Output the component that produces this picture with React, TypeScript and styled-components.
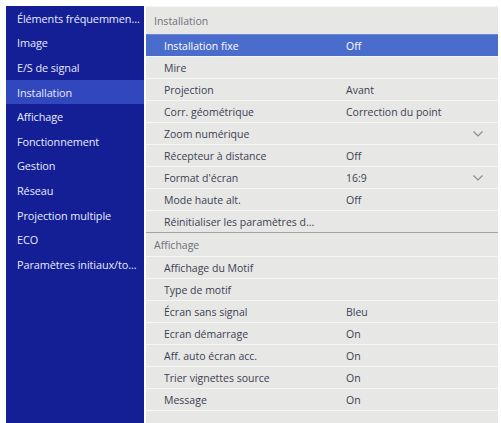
import styled, { createGlobalStyle } from "styled-components";

const GlobalStyle = createGlobalStyle`
  html, body {
    margin: 0;
    padding: 0;
    background: #ffffff;
  }
  body {
    font-family: "Open Sans", "Noto Sans", sans-serif;
  }
`;

type Row = {
  label: string;
  value?: string;
  drop?: boolean;
  active?: boolean;
};

type Section = {
  title: string;
  rows: Row[];
};

const menu = [
  "Éléments fréquemmen...",
  "Image",
  "E/S de signal",
  "Installation",
  "Affichage",
  "Fonctionnement",
  "Gestion",
  "Réseau",
  "Projection multiple",
  "ECO",
  "Paramètres initiaux/to...",
];

const sections: Section[] = [
  {
    title: "Installation",
    rows: [
      { label: "Installation fixe", value: "Off", active: true },
      { label: "Mire" },
      { label: "Projection", value: "Avant" },
      { label: "Corr. géométrique", value: "Correction du point" },
      { label: "Zoom numérique", drop: true },
      { label: "Récepteur à distance", value: "Off" },
      { label: "Format d'écran", value: "16:9", drop: true },
      { label: "Mode haute alt.", value: "Off" },
      { label: "Réinitialiser les paramètres d..." },
    ],
  },
  {
    title: "Affichage",
    rows: [
      { label: "Affichage du Motif" },
      { label: "Type de motif" },
      { label: "Écran sans signal", value: "Bleu" },
      { label: "Ecran démarrage", value: "On" },
      { label: "Aff. auto écran acc.", value: "On" },
      { label: "Trier vignettes source", value: "On" },
      { label: "Message", value: "On" },
      { label: "" },
    ],
  },
];

const Chevron = () => (
  <svg width="12" height="8" viewBox="0 0 12 8">
    <path d="M1.5 1.5 L6 6 L10.5 1.5" fill="none" stroke="#8a8d96" strokeWidth="1.2" />
  </svg>
);

export default function App() {
  return (
    <>
      <GlobalStyle />
      <Screen>
        <Sidebar>
          {menu.map((m, i) => (
            <MenuItem key={i} selected={m === "Installation"}>
              {m}
            </MenuItem>
          ))}
        </Sidebar>
        <Panel>
          {sections.map((s, si) => (
            <Group key={si} first={si === 0}>
              <GroupTitle first={si === 0}>{s.title}</GroupTitle>
              {s.rows.map((r, ri) => (
                <Item key={ri} active={r.active}>
                  <Label>{r.label}</Label>
                  <Value>{r.value}</Value>
                  <Arrow>{r.drop && <Chevron />}</Arrow>
                </Item>
              ))}
            </Group>
          ))}
        </Panel>
      </Screen>
    </>
  );
}

const Screen = styled.div`
  width: 501px;
  height: 423px;
  box-sizing: border-box;
  padding: 6px 3px 0 6px;
  display: flex;
  overflow: hidden;
`;

const Sidebar = styled.div`
  width: 138px;
  flex-shrink: 0;
  background: #141f95;
  display: flex;
  flex-direction: column;
`;

const MenuItem = styled.div<{ selected?: boolean }>`
  height: 24.6px;
  display: flex;
  align-items: center;
  padding-left: 11px;
  font-size: 10.9px;
  color: #e8ebff;
  white-space: nowrap;
  letter-spacing: -0.1px;
  background: ${(p) => (p.selected ? "#3147bd" : "transparent")};
`;

const Panel = styled.div`
  flex: 1;
  margin-left: 2px;
  background: #e7e7e6;
  border-top: 1px solid #f4f4f4;
  display: flex;
  flex-direction: column;
`;

const Group = styled.div<{ first?: boolean }>`
  display: flex;
  flex-direction: column;
  border-top: ${(p) => (p.first ? "none" : "1px solid #a3a3a6")};
`;

const GroupTitle = styled.div<{ first?: boolean }>`
  height: ${(p) => (p.first ? "27px" : "23px")};
  display: flex;
  align-items: center;
  padding-left: 8px;
  font-size: 10.5px;
  color: #6f7078;
`;

const Item = styled.div<{ active?: boolean }>`
  height: 22px;
  box-sizing: border-box;
  display: grid;
  grid-template-columns: 182px 1fr 26px;
  align-items: center;
  padding-left: 18px;
  font-size: 10.5px;
  color: ${(p) => (p.active ? "#ffffff" : "#3b3f52")};
  background: ${(p) => (p.active ? "#4a6ccc" : "transparent")};
  border-top: 1px solid ${(p) => (p.active ? "#6b88da" : "#f6f6f5")};
`;

const Label = styled.span`
  white-space: nowrap;
  overflow: hidden;
`;

const Value = styled.span`
  white-space: nowrap;
`;

const Arrow = styled.span`
  display: flex;
  align-items: center;
`;
